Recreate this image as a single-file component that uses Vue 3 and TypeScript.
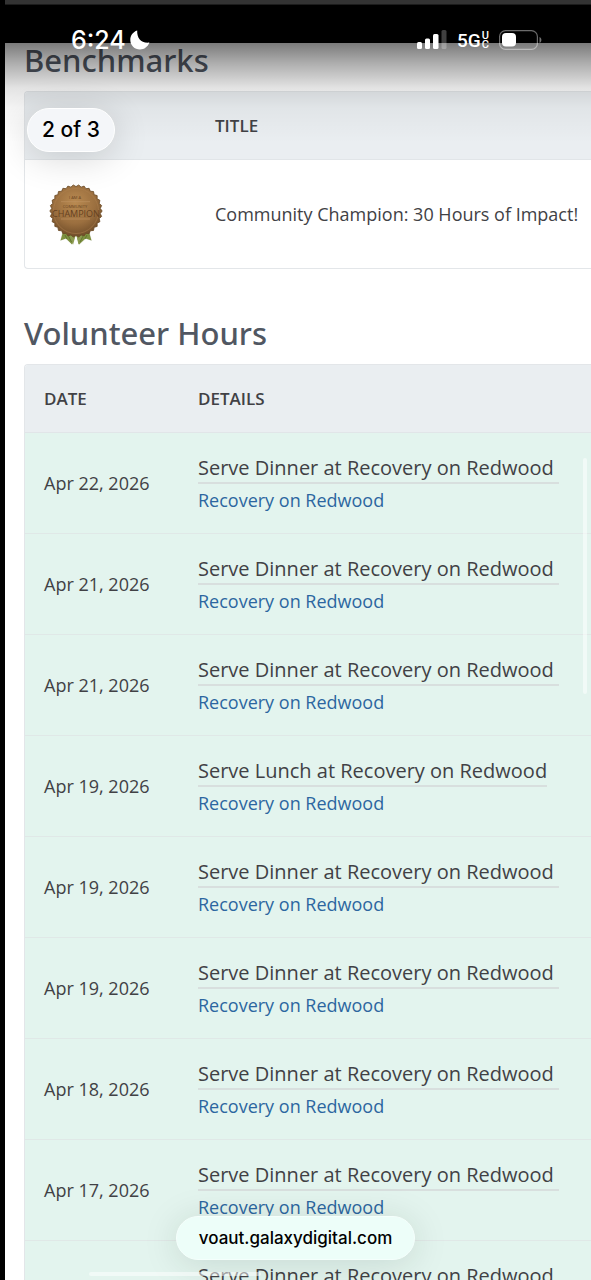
<script setup lang="ts">
interface HourEntry {
  id: number
  date: string
  title: string
  agency: string
}

const agency = 'Recovery on Redwood'
const dinner = 'Serve Dinner at Recovery on Redwood\u00a0'
const lunch = 'Serve Lunch at Recovery on Redwood'

const hours: HourEntry[] = [
  { id: 1, date: 'Apr 22, 2026', title: dinner, agency },
  { id: 2, date: 'Apr 21, 2026', title: dinner, agency },
  { id: 3, date: 'Apr 21, 2026', title: dinner, agency },
  { id: 4, date: 'Apr 19, 2026', title: lunch, agency },
  { id: 5, date: 'Apr 19, 2026', title: dinner, agency },
  { id: 6, date: 'Apr 19, 2026', title: dinner, agency },
  { id: 7, date: 'Apr 18, 2026', title: dinner, agency },
  { id: 8, date: 'Apr 17, 2026', title: dinner, agency },
  { id: 9, date: '', title: dinner, agency },
]

// Scalloped edge of the medal, alternating between two radii
const sealPoints = Array.from({ length: 60 }, (_, i) => {
  const radius = i % 2 ? 24.4 : 26.2
  const angle = (i * Math.PI) / 30
  return `${(30 + radius * Math.cos(angle)).toFixed(2)},${(30 + radius * Math.sin(angle)).toFixed(2)}`
}).join(' ')
</script>

<template>
  <div class="screen">
    <div class="top-strip"></div>
    <main class="content">
      <h2>Benchmarks</h2>
      <div class="frame">
        <table class="benchmarks">
          <thead>
            <tr>
              <th class="badge-col" aria-label="Badge"></th>
              <th>TITLE</th>
            </tr>
          </thead>
          <tbody>
            <tr>
              <td class="badge-cell">
                <svg class="badge" width="60" height="66" viewBox="0 0 60 66" role="img" aria-label="Community Champion badge">
                  <defs>
                    <radialGradient id="bronze" cx="48%" cy="34%" r="66%">
                      <stop offset="0" stop-color="#b98a51" />
                      <stop offset="0.6" stop-color="#9b6f3f" />
                      <stop offset="1" stop-color="#6f4c29" />
                    </radialGradient>
                  </defs>
                  <path d="M17 48 14 60 19.500 58 27.500 64 29 56 31 56 33 64 40 58 46 60 43 48Z" fill="#2c3a18" opacity=".1" />
                  <path d="M17.500 49 14.500 59.500 20 57.500 26 63.500 30 52.500ZM30 52.500 33 63.500 39.500 57.500 45.500 59.500 42.500 49Z" fill="#7f9140" />
                  <path d="M22.500 55 27 63.500 29.500 55ZM30.500 55 32.500 63.500 37.500 55Z" fill="#8c9a50" />
                  <path d="m19 54 2 4m18 0 2-4M22.500 55l3 6m8.500 0 3-6" stroke="#61762f" />
                  <polygon :points="sealPoints" fill="url(#bronze)" stroke="#684823" stroke-width=".8" />
                  <circle cx="30" cy="30" r="22.500" fill="none" stroke="#b18351" stroke-width=".5" />
                  <path d="M15 20.700h29M15 38h29" stroke="#bd9160" stroke-width=".7" />
                  <g class="badge-text" text-anchor="middle">
                    <text x="29" y="18" font-size="4">I AM A</text>
                    <text x="29" y="27" font-size="4">COMMUNITY</text>
                    <text x="30" y="36" font-size="9">CHAMPION</text>
                  </g>
                </svg>
              </td>
              <td>Community Champion: 30 Hours of Impact!</td>
            </tr>
          </tbody>
        </table>
      </div>

      <h2 class="next-section">Volunteer Hours</h2>
      <div class="frame">
        <table class="hours">
          <thead>
            <tr>
              <th class="date-col">DATE</th>
              <th>DETAILS</th>
            </tr>
          </thead>
          <tbody>
            <tr v-for="entry in hours" :key="entry.id">
              <td>{{ entry.date }}</td>
              <td>
                <div class="details">
                  <a class="title" href="#">{{ entry.title }}</a>
                  <a class="agency" href="#">{{ entry.agency }}</a>
                </div>
              </td>
            </tr>
          </tbody>
        </table>
      </div>
    </main>

    <div class="shade"></div>
    <header class="status">
      <div class="clock">
        <span>6:24</span>
        <svg width="20" height="20" viewBox="0 0 20 20" aria-label="Do not disturb">
          <path d="M7.200.5C6.800 8 11 13.500 19.400 12.600 17.800 17 14.300 19.500 10 19.500 4.500 19.500.300 15.300.300 10 .300 5.500 3 1.800 7.200.500Z" fill="#fff" />
        </svg>
      </div>
      <div class="signals">
        <svg width="30" height="20" viewBox="0 0 30 20" aria-label="Signal strength">
          <g fill="#fff">
            <rect x="0" y="12" width="5" height="7" rx="1.500" />
            <rect x="8" y="8.500" width="5" height="10.500" rx="1.500" />
            <rect x="16" y="4" width="5.500" height="15" rx="1.500" />
            <rect x="24.500" y="0" width="5" height="19" rx="1.500" opacity=".25" />
          </g>
        </svg>
        <div class="network"><span>5G</span><span class="stack"><span>U</span><span>C</span></span></div>
        <svg width="43" height="20" viewBox="0 0 43 20" aria-label="Battery">
          <rect x=".6" y=".6" width="37.800" height="18.800" rx="6" fill="none" stroke="#fff" stroke-opacity=".42" stroke-width="1.200" />
          <rect x="3" y="3" width="14" height="13.500" rx="4" fill="#fff" />
          <path d="M40.500 7c2.500.8 2.500 5.200 0 6Z" fill="#fff" opacity=".45" />
        </svg>
      </div>
    </header>
    <div class="counter">2 of 3</div>
    <div class="scroll-v"></div>
    <div class="address-wrap">
      <button class="address" type="button">voaut.galaxydigital.com</button>
    </div>
    <div class="scroll-h"></div>
  </div>
</template>

<style>
body {
  margin: 0;
  background: #000;
}
</style>

<style scoped>
.screen {
  position: relative;
  box-sizing: border-box;
  height: 100vh;
  overflow: hidden;
  padding-left: 5px;
  background: #000;
  color: #414145;
  font-family: "Open Sans", "Noto Sans", sans-serif;
}

.top-strip {
  height: 4px;
  background: #333;
  border-bottom: 1px solid #1c1c1c;
}

.content {
  min-height: 100vh;
  margin-top: 38px;
  padding-left: 19px;
  background: #fff;
}

h2 {
  margin: 0 0 14px;
  font-family: "Noto Sans", "Open Sans", sans-serif;
  font-size: 31px;
  line-height: 34px;
  font-weight: 500;
  color: #515762;
}

.next-section {
  margin-top: 47px;
}

.frame {
  overflow: hidden;
  border: 1px solid #e3e6e9;
  border-right: 0;
  border-radius: 4px 0 0 4px;
}

table {
  width: 100%;
  border-collapse: separate;
  border-spacing: 0;
  table-layout: fixed;
  white-space: nowrap;
  font-size: 18px;
  line-height: 24px;
}

th,
td {
  box-sizing: border-box;
  padding: 0 0 0 19px;
  text-align: left;
  vertical-align: middle;
}

th {
  height: 68px;
  background: #eaeef1;
  border-bottom: 1px solid #e1e5e8;
  font-size: 17px;
  font-weight: 600;
}

.badge-col {
  width: 171px;
}

.date-col {
  width: 154px;
}

.benchmarks td {
  height: 108px;
}

.benchmarks .badge-cell {
  padding-left: 21px;
}

.hours td {
  height: 101px;
  background: #e3f4ee;
  border-bottom: 1px solid #e0e8e7;
}

.badge {
  display: block;
}

.badge-text {
  fill: #66411f;
}

.details {
  display: flex;
  flex-direction: column;
  align-items: flex-start;
  gap: 4px;
}

.details a {
  text-decoration: none;
}

.title {
  border-bottom: 2px solid #d8dfde;
  color: #414145;
  font-size: 20px;
  line-height: 28px;
}

.agency {
  color: #2c66a0;
  line-height: 24px;
}

.shade {
  position: absolute;
  top: 43px;
  left: 5px;
  right: 0;
  height: 100px;
  background: linear-gradient(rgba(0, 0, 0, 0.52), rgba(0, 0, 0, 0.32) 20%, rgba(0, 0, 0, 0.11) 45%, rgba(0, 0, 0, 0.04) 65%, rgba(0, 0, 0, 0));
  pointer-events: none;
}

.status {
  position: absolute;
  top: 28px;
  left: 0;
  right: 0;
  display: flex;
  justify-content: space-between;
  padding: 0 49px 0 71px;
  color: #fff;
  font-family: Inter, sans-serif;
}

.clock,
.signals,
.network {
  display: flex;
  align-items: center;
}

.clock {
  gap: 4px;
  height: 24px;
  font-size: 25px;
  font-weight: 500;
}

.signals {
  gap: 10px;
  height: 24px;
}

.network {
  gap: 1px;
  font-family: Roboto, sans-serif;
  font-size: 19px;
  font-weight: 500;
}

.stack {
  display: flex;
  flex-direction: column;
  font-size: 11px;
  line-height: 9px;
}

.counter {
  position: absolute;
  top: 108px;
  left: 27px;
  box-sizing: border-box;
  padding: 0 14px;
  border: 1px solid #fff;
  border-radius: 22px;
  background: #f4f6f9;
  box-shadow: 0 6px 36px rgba(0, 0, 0, 0.16);
  color: #000;
  font-family: Inter, sans-serif;
  font-size: 21px;
  font-weight: 500;
  line-height: 42px;
}

.scroll-v {
  position: absolute;
  top: 458px;
  right: 4px;
  width: 4px;
  height: 236px;
  border-radius: 2px;
  background: rgba(255, 255, 255, 0.5);
}

.address-wrap {
  position: absolute;
  bottom: 20px;
  left: 0;
  right: 0;
  display: flex;
  justify-content: center;
}

.address {
  padding: 0 22px;
  border: 1px solid #f5fffc;
  border-radius: 22px;
  background: #edfef9;
  box-shadow: 0 4px 36px rgba(0, 40, 25, 0.13);
  color: #000;
  font-family: Inter, sans-serif;
  font-size: 17px;
  font-weight: 500;
  line-height: 42px;
}

.scroll-h {
  position: absolute;
  bottom: 4px;
  left: 89px;
  width: 172px;
  height: 4px;
  border-radius: 2px;
  background: rgba(255, 255, 255, 0.5);
}
</style>
